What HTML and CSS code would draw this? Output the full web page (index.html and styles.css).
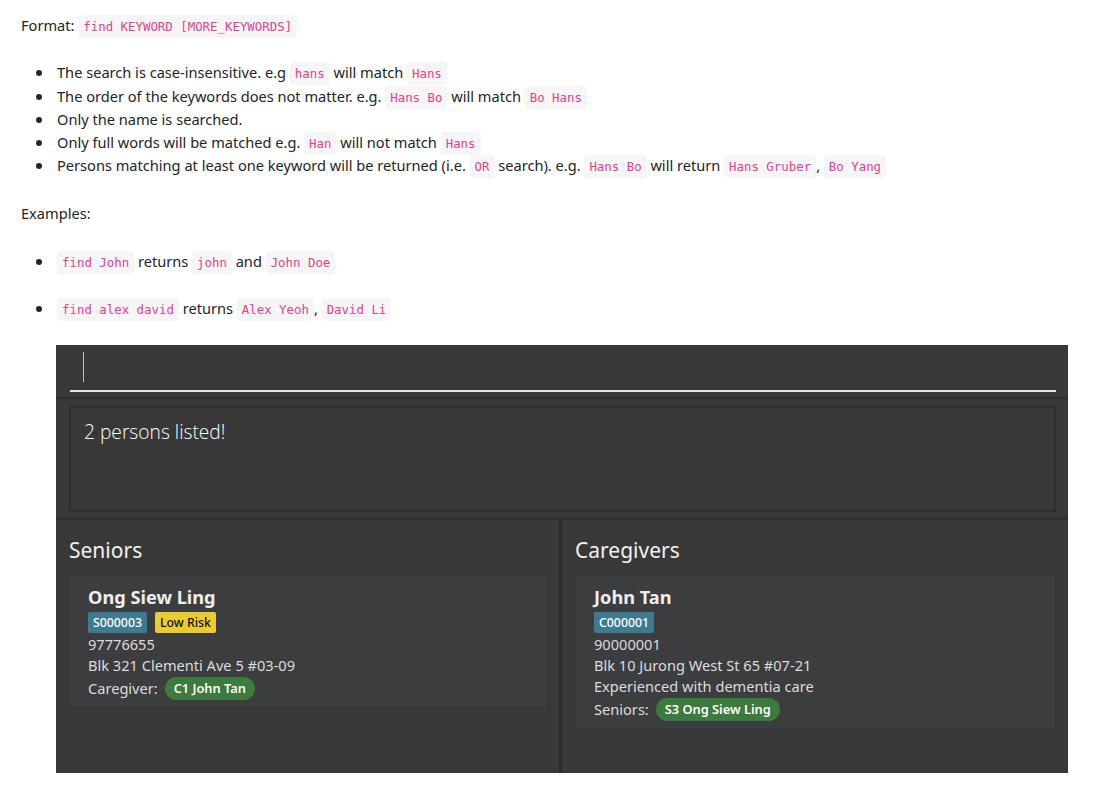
FILE: index.html
```html
<!DOCTYPE html>
<html lang="en">
<head>
<meta charset="utf-8">
<title>find command</title>
<link rel="stylesheet" href="styles.css">
</head>
<body>
<div class="doc">
  <p class="para">Format: <code>find KEYWORD [MORE_KEYWORDS]</code></p>
  <ul class="list">
    <li>The search is case-insensitive. e.g <code>hans</code> will match <code>Hans</code></li>
    <li>The order of the keywords does not matter. e.g. <code>Hans Bo</code> will match <code>Bo Hans</code></li>
    <li>Only the name is searched.</li>
    <li>Only full words will be matched e.g. <code>Han</code> will not match <code>Hans</code></li>
    <li>Persons matching at least one keyword will be returned (i.e. <code>OR</code> search). e.g. <code>Hans Bo</code> will return <code>Hans Gruber</code>, <code>Bo Yang</code></li>
  </ul>
  <p class="para examples">Examples:</p>
  <ul class="list loose">
    <li><p class="item"><code>find John</code> returns <code>john</code> and <code>John Doe</code></p></li>
    <li>
      <p class="item"><code>find alex david</code> returns <code>Alex Yeoh</code>, <code>David Li</code></p>
      <div class="app">
        <div class="app-main">
          <div class="cmd">
            <div class="cmd-field"><span class="caret"></span></div>
          </div>
          <div class="result">
            <div class="result-box">2 persons listed!</div>
          </div>
          <div class="panels">
            <div class="panel">
              <div class="panel-title">Seniors</div>
              <div class="card">
                <div class="name">Ong Siew Ling</div>
                <div class="badges">
                  <span class="badge id">S000003</span>
                  <span class="badge risk">Low Risk</span>
                </div>
                <div class="line first">97776655</div>
                <div class="line">Blk 321 Clementi Ave 5 #03-09</div>
                <div class="line link-row">Caregiver: <span class="pill">C1 John Tan</span></div>
              </div>
            </div>
            <div class="panel panel-right">
              <div class="panel-title">Caregivers</div>
              <div class="card">
                <div class="name">John Tan</div>
                <div class="badges">
                  <span class="badge id">C000001</span>
                </div>
                <div class="line first">90000001</div>
                <div class="line">Blk 10 Jurong West St 65 #07-21</div>
                <div class="line">Experienced with dementia care</div>
                <div class="line link-row">Seniors: <span class="pill">S3 Ong Siew Ling</span></div>
              </div>
            </div>
          </div>
        </div>
        <div class="app-edge"></div>
      </div>
    </li>
  </ul>
</div>
</body>
</html>
```
FILE: styles.css
```css
html, body {
  margin: 0;
  padding: 0;
  background: #ffffff;
  overflow: hidden;
}

.doc {
  padding: 14px 0 0 21px;
  font-family: "Noto Sans", "Open Sans", sans-serif;
  font-size: 14.6px;
  line-height: 23.25px;
  color: #212529;
}

.para {
  margin: 0 0 24px 0;
}

.para.examples {
  margin-bottom: 25px;
}

.list {
  margin: 0 0 24px 0;
  padding-left: 36px;
  list-style: none;
}

.list li {
  position: relative;
}

.list li::before {
  content: "";
  position: absolute;
  left: -21px;
  top: 9px;
  width: 6px;
  height: 6px;
  border-radius: 50%;
  background: #212529;
}

.loose li + li {
  margin-top: 24px;
}

.loose .item {
  margin: 0;
}

code {
  font-family: "DejaVu Sans Mono", "Liberation Mono", monospace;
  font-size: 12.4px;
  line-height: 1;
  color: #e83e8c;
  background: #f6f6f7;
  border-radius: 4px;
  padding: 4px 5px;
}

/* embedded application */
.app {
  margin-top: 25px;
  margin-left: -1px;
  width: 1012px;
  height: 428px;
  display: flex;
  background: #383838;
  font-family: "Noto Sans", "Open Sans", sans-serif;
}

.app-main {
  flex: 1;
  display: flex;
  flex-direction: column;
}

.app-edge {
  width: 2px;
  background: #0f6b6b;
}

.cmd {
  height: 54px;
  padding: 0 12px 0 14px;
  border-bottom: 2px solid #2d2d2d;
  box-sizing: border-box;
}

.cmd-field {
  height: 47px;
  border-bottom: 2px solid #e6e6e6;
  box-sizing: border-box;
  padding: 7px 0 0 13px;
}

.caret {
  display: block;
  width: 1px;
  height: 30px;
  background: #bdbdbd;
}

.result {
  height: 121px;
  padding: 7px 12px 6px 13px;
  box-sizing: border-box;
  border-bottom: 2px solid #2d2d2d;
}

.result-box {
  height: 100%;
  box-sizing: border-box;
  border: 2px solid #2f2f2f;
  padding: 10px 0 0 13px;
  color: #ffffff;
  font-family: "Open Sans", "Noto Sans", sans-serif;
  font-weight: 300;
  font-size: 19.2px;
  line-height: 28px;
}

.panels {
  flex: 1;
  display: flex;
}

.panel {
  width: 506px;
  padding: 15px 12px 0 13px;
  box-sizing: border-box;
  border-right: 3px solid #2d2d2d;
}

.panel-right {
  flex: 1;
  border-right: none;
  padding-right: 14px;
}

.panel-title {
  color: #f2f2f2;
  font-size: 21px;
  line-height: 30px;
  margin-bottom: 11px;
}

.card {
  background: #3c3d3f;
  padding: 8px 19px 7px 19px;
  color: #dcdcdc;
}

.name {
  font-size: 18.2px;
  font-weight: 700;
  line-height: 26px;
  color: #eeeeee;
}

.badges {
  display: flex;
  gap: 8px;
  margin: 2px 0 0 0;
}

.badge {
  font-size: 12.3px;
  line-height: 21px;
  padding: 0 5px;
  border-radius: 2px;
  font-weight: 500;
}

.badge.id {
  background: #3e7b91;
  color: #ffffff;
}

.badge.risk {
  background: #eccb2e;
  color: #111111;
}

.line {
  font-size: 14.6px;
  line-height: 21px;
}

.line.first {
  margin-top: 1px;
}

.link-row {
  display: flex;
  align-items: center;
  gap: 7px;
  margin-top: 1px;
}

.pill {
  background: #3d7a3d;
  color: #ffffff;
  font-size: 12.8px;
  font-weight: 600;
  line-height: 23px;
  padding: 0 9px;
  border-radius: 12px;
}
```
